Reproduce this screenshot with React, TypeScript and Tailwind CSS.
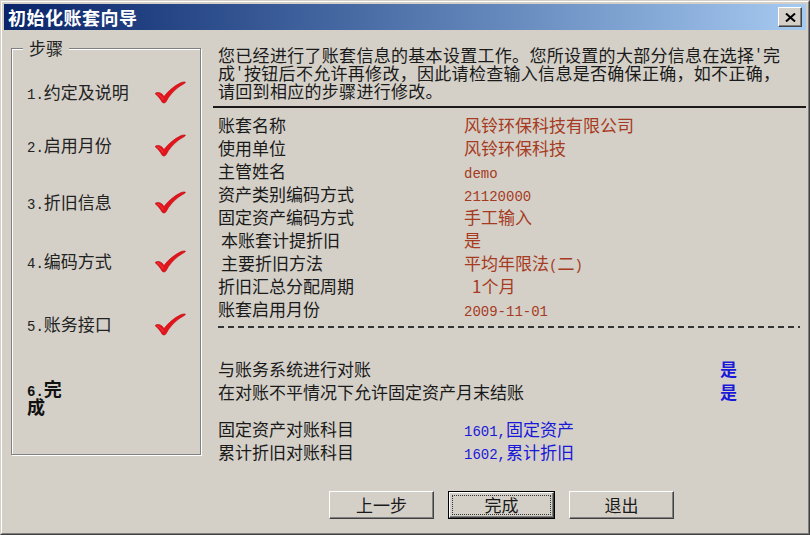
import { ReactNode } from 'react';

const VALUE_RED = 'text-[#a63a22]';
const VALUE_BLUE = 'text-[#1818d8]';

function Mono({ children }: { children: ReactNode }) {
  return <span className="font-['Liberation_Mono',monospace] text-[14px] leading-none">{children}</span>;
}

function CheckMark() {
  return (
    <svg width="32" height="23" viewBox="0 0 32 23" className="shrink-0">
      <path
        d="M1 12.5 C3 10.8 6 11.3 8 13 L10 15.5 C14 10 20 5 27 1.6 C29 0.8 31 0.7 31.5 1.4 C30 3 27 4.2 24 6.6 C19 10.6 15 15 12.2 20.5 C11.2 22.2 9.2 22.6 8 21 C6 17.5 4 15 1 12.5 Z"
        fill="#e3141c"
        stroke="#b80a10"
        strokeWidth="0.6"
      />
      <path d="M3.5 13 C5.5 13.5 7.5 15.5 9 18.5" stroke="#ff5a5a" strokeWidth="1" fill="none" opacity="0.6" />
    </svg>
  );
}

function TitleBar() {
  return (
    <div className="flex h-[26px] items-center justify-between bg-gradient-to-r from-[#0a246a] to-[#a6caf0] pl-[4px] pr-[4px]">
      <span className="text-[18px] leading-[26px] font-bold tracking-[0.5px] text-white">初始化账套向导</span>
      <button className="flex h-[20px] w-[24px] items-center justify-center border border-t-white border-l-white border-r-[#404040] border-b-[#404040] bg-[#d4d0c8] shadow-[inset_-1px_-1px_0_#808080]">
        <svg width="11" height="9" viewBox="0 0 11 9">
          <path d="M1 0.5 L10 8.5 M10 0.5 L1 8.5" stroke="#000" strokeWidth="2" />
        </svg>
      </button>
    </div>
  );
}

const steps = [
  { num: '1.', label: '约定及说明', mt: 'mt-[32px]' },
  { num: '2.', label: '启用月份', mt: 'mt-[31px]' },
  { num: '3.', label: '折旧信息', mt: 'mt-[35px]' },
  { num: '4.', label: '编码方式', mt: 'mt-[37px]' },
  { num: '5.', label: '账务接口', mt: 'mt-[41px]' },
];

function StepsGroup() {
  return (
    <div className="relative ml-[7px] mt-[18px] h-[407px] w-[190px] border border-[#808080] shadow-[inset_1px_1px_0_#fff,1px_1px_0_#fff]">
      <span className="absolute -top-[11px] left-[11px] bg-[#d4d0c8] px-[6px] text-[17px] leading-[20px] text-[#222]">步骤</span>
      <div className="flex flex-col pl-[15px]">
        {steps.map((step) => (
          <div key={step.num} className={`flex h-[22px] items-center ${step.mt}`}>
            <span className="w-[127px] text-[17px] leading-[22px] text-[#222]">
              <Mono>{step.num}</Mono>
              {step.label}
            </span>
            <CheckMark />
          </div>
        ))}
        <div className="mt-[44px] text-[18px] font-bold text-[#111]">
          <div className="h-[18px] leading-[18px]">
            <Mono>6.</Mono>完
          </div>
          <div className="h-[18px] leading-[18px]">成</div>
        </div>
      </div>
    </div>
  );
}

type Row = { label: ReactNode; value: ReactNode; indent?: boolean };

const infoRows: Row[] = [
  { label: '账套名称', value: '风铃环保科技有限公司' },
  { label: '使用单位', value: '风铃环保科技' },
  { label: '主管姓名', value: <Mono>demo</Mono> },
  { label: '资产类别编码方式', value: <Mono>21120000</Mono> },
  { label: '固定资产编码方式', value: '手工输入' },
  { label: '本账套计提折旧', value: '是', indent: true },
  {
    label: '主要折旧方法',
    value: (
      <>
        平均年限法<Mono>(</Mono>二<Mono>)</Mono>
      </>
    ),
    indent: true,
  },
  { label: '折旧汇总分配周期', value: <span className="pl-[8px]">1个月</span> },
  { label: '账套启用月份', value: <Mono>2009-11-01</Mono> },
];

const introLines: ReactNode[] = [
  <>
    您已经进行了账套信息的基本设置工作。您所设置的大部分信息在选择<Mono>'</Mono>完
  </>,
  <>
    成<Mono>'</Mono>按钮后不允许再修改，因此请检查输入信息是否确保正确，如不正确，
  </>,
  <>请回到相应的步骤进行修改。</>,
];

function Summary() {
  return (
    <div className="ml-[12px] flex flex-1 flex-col pt-[16px] text-[17px] text-[#1a1a1a]">
      <div className="pl-[5px] tracking-[0.3px]">
        {introLines.map((line, i) => (
          <div key={i} className="flex h-[18px] items-center whitespace-nowrap leading-[18px]">
            {line}
          </div>
        ))}
      </div>

      <div className="mt-[6px] h-[2px] bg-[#1a1a1a]" />

      <div className="mt-[5px] pl-[5px]">
        {infoRows.map((row, i) => (
          <div key={i} className="flex h-[23px] items-center">
            <span className={`w-[246px] ${row.indent ? 'pl-[3px]' : ''}`}>{row.label}</span>
            <span className={VALUE_RED}>{row.value}</span>
          </div>
        ))}
      </div>

      <div className="ml-[5px] mr-[6px] mt-[6px] h-[2px] bg-[repeating-linear-gradient(90deg,#333_0_6px,transparent_6px_10px)]" />

      <div className="mt-[29px] pl-[5px]">
        <div className="flex h-[23px] items-center">
          <span className="w-[502px]">与账务系统进行对账</span>
          <span className={`font-bold ${VALUE_BLUE}`}>是</span>
        </div>
        <div className="flex h-[23px] items-center">
          <span className="w-[502px]">在对账不平情况下允许固定资产月末结账</span>
          <span className={`font-bold ${VALUE_BLUE}`}>是</span>
        </div>
      </div>

      <div className="mt-[14px] pl-[5px]">
        <div className="flex h-[23px] items-center">
          <span className="w-[246px]">固定资产对账科目</span>
          <span className={VALUE_BLUE}>
            <Mono>1601,</Mono>固定资产
          </span>
        </div>
        <div className="flex h-[23px] items-center">
          <span className="w-[246px]">累计折旧对账科目</span>
          <span className={VALUE_BLUE}>
            <Mono>1602,</Mono>累计折旧
          </span>
        </div>
      </div>

      <div className="ml-[116px] mt-[28px] flex gap-[14px]">
        <button className="h-[28px] w-[105px] border border-t-white border-l-white border-r-[#404040] border-b-[#404040] bg-[#d4d0c8] text-[17px] leading-[24px] shadow-[inset_-1px_-1px_0_#808080]">
          上一步
        </button>
        <button className="h-[28px] w-[107px] border border-black bg-[#d4d0c8] p-0">
          <div className="h-full w-full border border-t-white border-l-white border-r-[#404040] border-b-[#404040] p-[2px] shadow-[inset_-1px_-1px_0_#808080]">
            <div className="flex h-full w-full items-center justify-center border border-dotted border-[#333] text-[17px] leading-[18px]">
              完成
            </div>
          </div>
        </button>
        <button className="h-[28px] w-[105px] border border-t-white border-l-white border-r-[#404040] border-b-[#404040] bg-[#d4d0c8] text-[17px] leading-[24px] shadow-[inset_-1px_-1px_0_#808080]">
          退出
        </button>
      </div>
    </div>
  );
}

export default function App() {
  return (
    <div className="h-[535px] w-[810px] border border-t-[#d4d0c8] border-l-[#d4d0c8] border-r-[#404040] border-b-[#404040] bg-[#d4d0c8] font-['Noto_Sans_CJK_SC','Liberation_Sans',sans-serif] text-[#1a1a1a]">
      <div className="flex h-full flex-col border border-t-white border-l-white border-r-[#808080] border-b-[#808080] p-[2px]">
        <TitleBar />
        <div className="flex flex-1">
          <StepsGroup />
          <Summary />
        </div>
      </div>
    </div>
  );
}
